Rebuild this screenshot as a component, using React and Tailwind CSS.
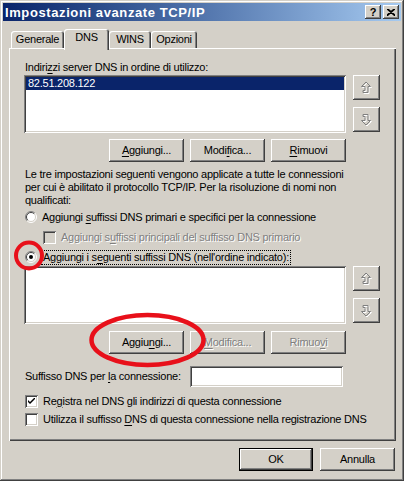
const raised =
  "bg-[#d4d0c8] shadow-[inset_-1px_-1px_#404040,inset_1px_1px_#ffffff,inset_-2px_-2px_#808080,inset_2px_2px_#d4d0c8]";
const sunken =
  "shadow-[inset_1px_1px_#808080,inset_-1px_-1px_#ffffff,inset_2px_2px_#404040,inset_-2px_-2px_#d4d0c8]";
const disabledText = "text-[#808080] [text-shadow:1px_1px_0_#ffffff]";

function Key({ children }) {
  return <span className="underline underline-offset-[2px] decoration-1">{children}</span>;
}

function Button({ children, width = "w-[75px]", disabled, isDefault }) {
  if (isDefault) {
    return (
      <div className={`${width} h-[23px] border border-black`}>
        <div className={`${raised} flex h-full items-center justify-center`}>{children}</div>
      </div>
    );
  }
  return (
    <div
      className={`${raised} ${width} flex h-[23px] items-center justify-center ${disabled ? disabledText : ""}`}
    >
      {children}
    </div>
  );
}

function MoveIcon({ down }) {
  const up = "M6 1 L10.5 5.5 L8 5.5 L8 11.5 L3 11.5 L3 9.5 L5 9.5 L5 5.5 L1.5 5.5 Z";
  const dn = "M3 1.5 L8 1.5 L8 7.5 L10.5 7.5 L6 12 L1.5 7.5 L5 7.5 L5 3.5 L3 3.5 Z";
  const d = down ? dn : up;
  return (
    <svg width="13" height="14" viewBox="0 0 13 14">
      <path d={d} transform="translate(1 1)" fill="none" stroke="#ffffff" strokeWidth="1" />
      <path d={d} fill="none" stroke="#808080" strokeWidth="1" />
    </svg>
  );
}

function ListBlock({ item }) {
  return (
    <div className="flex">
      <div className={`${sunken} h-[58px] w-[322px] bg-white p-[2px]`}>
        {item && (
          <div className="h-[13px] bg-[#0a246a] pl-[2px] leading-[13px] text-white">{item}</div>
        )}
      </div>
      <div className="ml-[7px] flex flex-col gap-[7px]">
        <div className={`${raised} flex h-[25px] w-[27px] items-center justify-center`}>
          <MoveIcon />
        </div>
        <div className={`${raised} flex h-[25px] w-[27px] items-center justify-center`}>
          <MoveIcon down />
        </div>
      </div>
    </div>
  );
}

function Radio({ checked }) {
  return (
    <svg width="12" height="12" viewBox="0 0 12 12" className="shrink-0">
      <circle cx="6" cy="6" r="5" fill="#ffffff" />
      <path d="M2.11 9.89 A5.5 5.5 0 0 1 9.89 2.11" fill="none" stroke="#808080" />
      <path d="M9.89 2.11 A5.5 5.5 0 0 1 2.11 9.89" fill="none" stroke="#ffffff" />
      <path d="M2.8 9.2 A4.5 4.5 0 0 1 9.2 2.8" fill="none" stroke="#404040" />
      <path d="M9.2 2.8 A4.5 4.5 0 0 1 2.8 9.2" fill="none" stroke="#d4d0c8" />
      {checked && <circle cx="6" cy="6" r="2" fill="#000000" />}
    </svg>
  );
}

function Check({ checked, disabled }) {
  return (
    <div
      className={`${sunken} flex h-[13px] w-[13px] shrink-0 items-center justify-center ${disabled ? "bg-[#d4d0c8]" : "bg-white"}`}
    >
      {checked && (
        <svg width="7" height="7" viewBox="0 0 7 7">
          <path d="M0 2 L0 4 L2 6 L7 1 L7 -1 L2 4 Z" fill="#000000" />
        </svg>
      )}
    </div>
  );
}

function Tab({ children, selected, width }) {
  if (selected) {
    return (
      <div
        className={`relative z-10 -mb-[2px] flex h-[21px] ${width} items-start justify-center rounded-t-[3px] bg-[#d4d0c8] pt-[2px] shadow-[inset_1px_1px_#ffffff,inset_-1px_0_#404040,inset_-2px_0_#808080]`}
      >
        {children}
      </div>
    );
  }
  return (
    <div
      className={`flex h-[17px] ${width} items-center justify-center rounded-t-[3px] bg-[#d4d0c8] shadow-[inset_1px_1px_#ffffff,inset_-1px_0_#404040,inset_-2px_0_#808080]`}
    >
      {children}
    </div>
  );
}

export default function App() {
  return (
    <div className="relative h-[481px] w-[404px] bg-[#d4d0c8] p-[3px] font-['Liberation_Sans',Arial,sans-serif] text-[11px] leading-[13px] tracking-[-0.25px] text-black shadow-[inset_-1px_-1px_#404040,inset_1px_1px_#d4d0c8,inset_-2px_-2px_#808080,inset_2px_2px_#ffffff]">
      {/* title bar */}
      <div className="flex h-[18px] items-center bg-gradient-to-r from-[#0a246a] to-[#a6caf0] pl-[2px] pr-[2px]">
        <span className="flex-1 text-[13px] font-bold tracking-[0.6px] text-white">
          Impostazioni avanzate TCP/IP
        </span>
        <div className={`${raised} flex h-[14px] w-[16px] items-center justify-center text-[11px] font-bold leading-none`}>
          ?
        </div>
        <div className={`${raised} ml-[2px] flex h-[14px] w-[16px] items-center justify-center`}>
          <svg width="8" height="7" viewBox="0 0 8 7">
            <path d="M0 0 L8 7 M1 0 L9 7 M8 0 L0 7 M7 0 L-1 7" stroke="#000" strokeWidth="1.2" />
          </svg>
        </div>
      </div>

      {/* tabs */}
      <div className="mt-[8px] flex items-end pl-[8px]">
        <Tab width="w-[53px]">Generale</Tab>
        <Tab width="w-[45px]" selected>
          DNS
        </Tab>
        <Tab width="w-[42px]">WINS</Tab>
        <Tab width="w-[46px]">Opzioni</Tab>
      </div>

      {/* panel */}
      <div className="ml-[6px] h-[393px] w-[387px] pl-[15px] pt-[13px] shadow-[inset_1px_1px_#ffffff,inset_-1px_-1px_#404040,inset_-2px_-2px_#808080]">
        <div className="pl-[1px]">
          Indiri<Key>z</Key>zi server DNS in ordine di utilizzo:
        </div>
        <div className="mt-[1px]">
          <ListBlock item="82.51.208.122" />
        </div>
        <div className="mt-[6px] flex w-[322px] justify-end gap-[6px]">
          <Button>
            <Key>A</Key>ggiungi...
          </Button>
          <Button>
            Modi<Key>f</Key>ica...
          </Button>
          <Button>
            <Key>R</Key>imuovi
          </Button>
        </div>

        <p className="mt-[6px] pl-[1px]">
          Le tre impostazioni seguenti vengono applicate a tutte le connessioni
          <br />
          per cui è abilitato il protocollo TCP/IP. Per la risoluzione di nomi non
          <br />
          qualificati:
        </p>

        <div className="mt-[2px] flex h-[16px] items-center pl-[1px]">
          <Radio />
          <span className="ml-[5px]">
            Aggiungi <Key>s</Key>uffissi DNS primari e specifici per la connessione
          </span>
        </div>
        <div className="mt-[4px] flex h-[16px] items-center pl-[19px]">
          <Check disabled />
          <span className={`ml-[5px] ${disabledText}`}>
            Aggiungi s<Key>u</Key>ffissi principali del suffisso DNS primario
          </span>
        </div>
        <div className="mt-[4px] flex h-[16px] items-center pl-[1px]">
          <Radio checked />
          <span className="ml-[4px] border border-dotted border-black px-[1px]">
            Aggiungi i s<Key>e</Key>guenti suffissi DNS (nell'ordine indicato):
          </span>
        </div>

        <div className="mt-[1px]">
          <ListBlock />
        </div>
        <div className="mt-[7px] flex w-[322px] justify-end gap-[6px]">
          <Button>
            Aggiu<Key>n</Key>gi...
          </Button>
          <Button disabled>
            <Key>M</Key>odifica...
          </Button>
          <Button disabled>
            Rimuo<Key>v</Key>i
          </Button>
        </div>

        <div className="mt-[12px] flex items-center">
          <span className="w-[166px] pl-[1px]">
            Suffisso DNS per <Key>l</Key>a connessione:
          </span>
          <div className={`${sunken} h-[21px] w-[153px] bg-white`} />
        </div>

        <div className="mt-[6px] flex h-[16px] items-center pl-[1px]">
          <Check checked />
          <span className="ml-[5px]">
            Re<Key>g</Key>istra nel DNS gli indirizzi di questa connessione
          </span>
        </div>
        <div className="mt-[2px] flex h-[16px] items-center pl-[1px]">
          <Check />
          <span className="ml-[5px]">
            Utilizza il suffisso <Key>D</Key>NS di questa connessione nella registrazione DNS
          </span>
        </div>
      </div>

      {/* footer */}
      <div className="mt-[7px] flex justify-end gap-[7px] pr-[6px]">
        <Button isDefault width="w-[74px]">
          OK
        </Button>
        <Button>Annulla</Button>
      </div>

      {/* annotations */}
      <svg className="pointer-events-none absolute left-0 top-0" width="404" height="481">
        <circle cx="29" cy="255.5" r="13" fill="none" stroke="#e8101a" strokeWidth="4" />
        <ellipse cx="147.5" cy="340" rx="56" ry="25" fill="none" stroke="#e8101a" strokeWidth="4.5" />
      </svg>
    </div>
  );
}
